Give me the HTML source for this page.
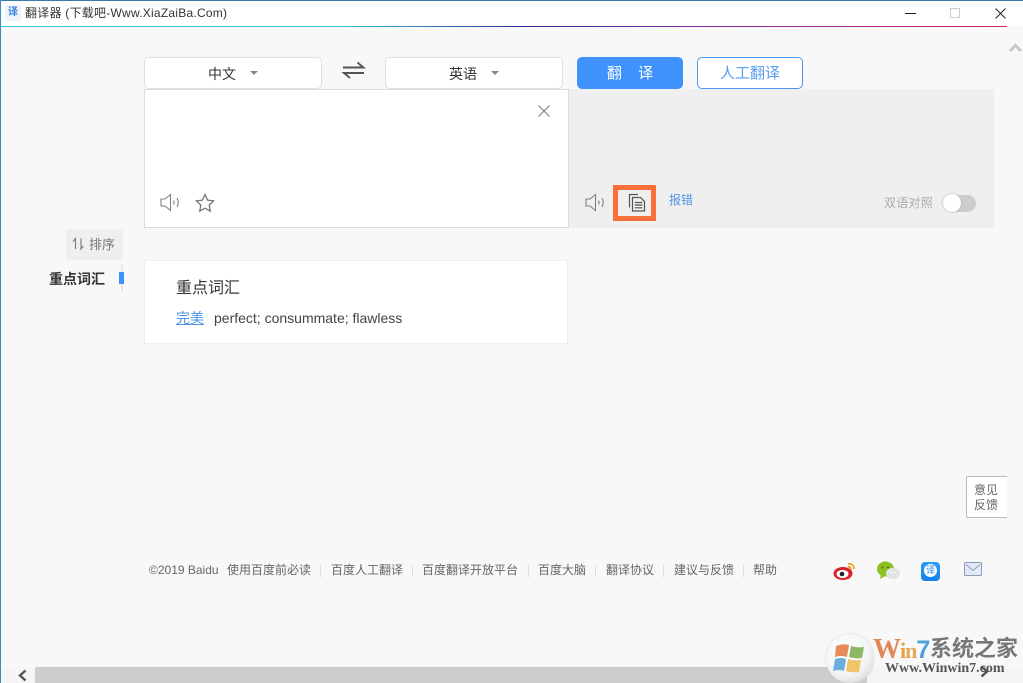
<!DOCTYPE html>
<html><head><meta charset="utf-8"><style>
html,body{margin:0;padding:0}
body{width:1023px;height:683px;position:relative;overflow:hidden;background:#f8f8f9;font-family:"Liberation Sans","Noto Sans CJK SC",sans-serif;color:#333}
.a{position:absolute;box-sizing:border-box;white-space:nowrap}
svg{position:absolute;overflow:visible}
</style></head><body>
<div class="a" style="left:0;top:0;width:1023px;height:26px;background:#fff"></div>
<div class="a" style="left:0;top:26px;width:1007px;height:1px;background:linear-gradient(90deg,#3fc4dc 0,#3cc0da 34%,#2c2c9c 52%,#7a2ca0 68%,#d0286e 100%)"></div>
<div class="a" style="left:0;top:0;width:1023px;height:1px;background:#3c7aa6"></div>
<div class="a" style="left:0;top:0;width:1px;height:683px;background:#3c8ac0"></div>

<div class="a" style="left:5px;top:5px;width:16px;height:16px;background:#eef3fb;border-radius:3px;color:#2f7fe0;font-size:10px;line-height:16px;text-align:center;font-weight:bold">译</div>
<div class="a" style="left:25px;top:5px;font-size:12px;line-height:17px;color:#333;letter-spacing:.24px">翻译器 (下载吧-Www.XiaZaiBa.Com)</div>

<div class="a" style="left:905px;top:13px;width:11px;height:1px;background:#222"></div>
<div class="a" style="left:950px;top:8px;width:10px;height:10px;border:1px solid #ccc"></div>
<svg style="left:995px;top:8px" width="11" height="11"><path d="M.5.5l10 10M10.500.5l-10 10" stroke="#222" fill="none"/></svg>
<svg style="left:1009px;top:43px" width="13" height="10"><path d="M1 8l5.500-5.500L12 8" stroke="#c8c8c8" stroke-width="3" fill="none"/></svg>

<div class="a" style="left:144px;top:57px;width:178px;height:32px;background:#fff;border:1px solid #e0e0e0;border-radius:5px"></div>
<div class="a" style="left:208px;top:65px;font-size:14px;line-height:18px;color:#333">中文</div>
<div class="a" style="left:250px;top:71px;width:0;height:0;border:4px solid transparent;border-top:4px solid #888;border-bottom:0"></div>

<svg style="left:342px;top:61px" width="24" height="18"><path d="M1 6.500h20.500l-6-5M22 12H2l6 5" stroke="#555" stroke-width="1.900" fill="none"/></svg>

<div class="a" style="left:385px;top:57px;width:178px;height:32px;background:#fff;border:1px solid #e0e0e0;border-radius:5px"></div>
<div class="a" style="left:449px;top:65px;font-size:14px;line-height:18px;color:#333">英语</div>
<div class="a" style="left:491px;top:71px;width:0;height:0;border:4px solid transparent;border-top:4px solid #888;border-bottom:0"></div>

<div class="a" style="left:577px;top:57px;width:106px;height:32px;background:#3f92fb;border-radius:5px;color:#fff;font-size:15px;line-height:33px;text-align:center;word-spacing:12px">翻 译</div>
<div class="a" style="left:697px;top:57px;width:106px;height:32px;background:#fff;border:1px solid #4b96ee;border-radius:5px;color:#5a9ef0;font-size:15px;line-height:31px;text-align:center">人工翻译</div>

<div class="a" style="left:144px;top:89px;width:425px;height:139px;background:#fff;border:1px solid #dcdcdc"></div>
<svg style="left:538px;top:105px" width="12" height="12"><path d="M.5.5l11 11M11.500.5l-11 11" stroke="#777" fill="none"/></svg>
<svg style="left:160px;top:193px" width="22" height="19"><path d="M1 6h4l5.500-4.500v16L5 13H1zM13.500 7.500q1.300 2 0 4M17 5q2.500 4.500 0 9" stroke="#808080" stroke-width="1.100" fill="none"/></svg>
<svg style="left:195px;top:193px" width="20" height="19"><path d="M10 1.500l2.600 5.600 6 .8-4.400 4.200 1.100 6L10 15.200l-5.300 2.900 1.100-6L1.400 7.900l6-.8z" stroke="#777" stroke-width="1.300" fill="none"/></svg>

<div class="a" style="left:569px;top:89px;width:425px;height:139px;background:#efefef"></div>
<svg style="left:585px;top:193px" width="22" height="19"><path d="M1 6h4l5.500-4.500v16L5 13H1zM13.500 7.500q1.300 2 0 4M17 5q2.500 4.500 0 9" stroke="#808080" stroke-width="1.100" fill="none"/></svg>
<div class="a" style="left:613px;top:185px;width:43px;height:36px;border:5px solid #f96f3a"></div>
<svg style="left:627px;top:193px" width="20" height="19"><path d="M11 1.500H2.500v13" stroke="#555" stroke-width="1.200" fill="none"/><path d="M5.500 4.500h8l4 4v9.500h-12z M7.800 9.500h7.500M7.800 12h7.500M7.800 14.800h7.500" stroke="#555" stroke-width="1.200" fill="none"/></svg>
<div class="a" style="left:669px;top:192px;font-size:12px;line-height:17px;color:#4f94e6">报错</div>
<div class="a" style="left:884px;top:195px;font-size:12px;line-height:17px;color:#aaa;letter-spacing:.25px">双语对照</div>
<div class="a" style="left:943px;top:195px;width:33px;height:17px;background:#ccc;border-radius:9px"></div>
<div class="a" style="left:943px;top:194px;width:18px;height:18px;background:#fff;border-radius:50%;box-shadow:0 0 2px #aaa"></div>

<div class="a" style="left:66px;top:229px;width:57px;height:31px;background:#efefef;border-radius:3px"></div>
<svg style="left:72px;top:237px" width="13" height="14"><path d="M3.500 12V1.500L1 4.500M9 1.500V12l2.500-3" stroke="#777" stroke-width="1.100" fill="none"/></svg>
<div class="a" style="left:89px;top:236px;font-size:13px;line-height:18px;color:#777">排序</div>
<div class="a" style="left:49px;top:270px;font-size:14px;line-height:18px;font-weight:bold;color:#333">重点词汇</div>
<div class="a" style="left:121px;top:265px;width:2px;height:26px;background:#e6e6e6"></div>
<div class="a" style="left:119px;top:272px;width:5px;height:12px;background:#3f92fb"></div>

<div class="a" style="left:144px;top:260px;width:424px;height:84px;background:#fff;border:1px solid #eee"></div>
<div class="a" style="left:176px;top:279px;font-size:16px;line-height:20px;color:#333">重点词汇</div>
<div class="a" style="left:176px;top:310px;font-size:14px;line-height:17px;color:#4f94e6;text-decoration:underline">完美</div>
<div class="a" style="left:214px;top:310px;font-size:14px;line-height:17px;color:#444">perfect; consummate; flawless</div>

<div class="a" style="left:966px;top:476px;width:41px;height:42px;background:#fff;border:1px solid #bbb;border-right:0;border-radius:2px 0 0 2px;font-size:12px;line-height:15px;color:#666;padding:6px 0 0 7px;white-space:normal">意见<br>反馈</div>

<div class="a" style="left:149px;top:562px;font-size:12px;line-height:17px;color:#666">©2019 Baidu</div>
<div class="a" style="left:227px;top:562px;font-size:12px;line-height:17px;color:#666">使用百度前必读</div>
<div class="a" style="left:320px;top:565px;width:1px;height:12px;background:#ddd"></div>
<div class="a" style="left:331px;top:562px;font-size:12px;line-height:17px;color:#666">百度人工翻译</div>
<div class="a" style="left:412px;top:565px;width:1px;height:12px;background:#ddd"></div>
<div class="a" style="left:422px;top:562px;font-size:12px;line-height:17px;color:#666">百度翻译开放平台</div>
<div class="a" style="left:528px;top:565px;width:1px;height:12px;background:#ddd"></div>
<div class="a" style="left:538px;top:562px;font-size:12px;line-height:17px;color:#666">百度大脑</div>
<div class="a" style="left:595px;top:565px;width:1px;height:12px;background:#ddd"></div>
<div class="a" style="left:606px;top:562px;font-size:12px;line-height:17px;color:#666">翻译协议</div>
<div class="a" style="left:663px;top:565px;width:1px;height:12px;background:#ddd"></div>
<div class="a" style="left:674px;top:562px;font-size:12px;line-height:17px;color:#666">建议与反馈</div>
<div class="a" style="left:743px;top:565px;width:1px;height:12px;background:#ddd"></div>
<div class="a" style="left:753px;top:562px;font-size:12px;line-height:17px;color:#666">帮助</div>

<svg style="left:833px;top:561px" width="24" height="20"><ellipse cx="10" cy="12.500" rx="9.500" ry="6.500" fill="#d8232a"/><ellipse cx="9.500" cy="13" rx="6" ry="4" fill="#fff"/><circle cx="9" cy="13" r="2.300" fill="#222"/><path d="M15 3q6-1 6 5M15 6q3-.5 3 2.500" stroke="#f09a20" stroke-width="1.600" fill="none"/></svg>
<svg style="left:876px;top:561px" width="26" height="20"><ellipse cx="9.500" cy="8" rx="8.500" ry="7.500" fill="#8cc21f"/><path d="M5 13l-1 5 5-3z" fill="#8cc21f"/><ellipse cx="17" cy="12.500" rx="7" ry="5.800" fill="#e4e4e4"/><circle cx="6.500" cy="6.500" r="1" fill="#4b6b10"/><circle cx="12" cy="6.500" r="1" fill="#4b6b10"/><circle cx="15" cy="11.500" r=".9" fill="#fff"/><circle cx="19" cy="11.500" r=".9" fill="#fff"/></svg>
<div class="a" style="left:921px;top:562px;width:19px;height:19px;background:linear-gradient(#2c9cf6,#1480f0);border-radius:4px"></div>
<div class="a" style="left:924px;top:564px;width:13px;height:13px;background:#fff;border-radius:50%;color:#1f8af2;font-size:9px;line-height:13px;text-align:center">译</div>
<svg style="left:964px;top:562px" width="19" height="15"><rect x=".5" y=".5" width="17" height="13" rx="1" fill="#e2e9f8" stroke="#8e9cb8"/><path d="M2 2.500l7 6 7-6" stroke="#8e9cb8" fill="none"/></svg>

<div class="a" style="left:1px;top:667px;width:1022px;height:16px;background:#f5f5f5"></div>
<div class="a" style="left:35px;top:667px;width:832px;height:16px;background:#cdcdcd"></div>
<svg style="left:17px;top:669px" width="11" height="13"><path d="M8.500 1.500L3 6.500l5.500 5" stroke="#555" stroke-width="2.400" fill="none"/></svg>
<svg style="left:979px;top:665px" width="11" height="13"><path d="M2.500 1.500L8 6.500l-5.500 5" stroke="#555" stroke-width="2.400" fill="none"/></svg>

<div class="a" style="left:826px;top:634px;width:48px;height:49px;border-radius:50%;background:radial-gradient(circle at 40% 35%,#fff 0,#f2f4f5 55%,#c8cdd0 100%);box-shadow:0 0 2px #ccc"></div>
<svg style="left:834px;top:641px" width="33" height="34"><path d="M2 5q7-3 13-1l-2 12q-6-2-12 0z" fill="#e88a5a"/><path d="M17 5q6 2 13 1l-2 11q-7 1-13-1z" fill="#8fb866"/><path d="M1 18q6-2 11 0l-2 12q-5-2-11 0z" fill="#6aaee0"/><path d="M14 18q6 2 13 1l-2 12q-7 1-13-1z" fill="#f0c468"/></svg>
<div class="a" style="left:873px;top:633px;font-family:'Liberation Serif',serif;font-weight:bold;font-size:28px;line-height:34px;color:#e08858;letter-spacing:-1px">W<span style="font-size:22px;color:#e8a040">i</span><span style="font-size:22px;color:#e8a85a">n</span><span style="color:#4fa0d8;font-size:25px;font-family:'Liberation Sans',sans-serif">7</span></div>
<div class="a" style="left:930px;top:632px;font-family:'Noto Sans CJK SC',sans-serif;font-weight:bold;font-size:22px;line-height:30px;color:#777">系统之家</div>
<div class="a" style="left:885px;top:660px;font-family:'Liberation Serif',serif;font-weight:bold;font-size:14px;line-height:18px;color:#555">Www.Winwin7.com</div>
</body></html>
